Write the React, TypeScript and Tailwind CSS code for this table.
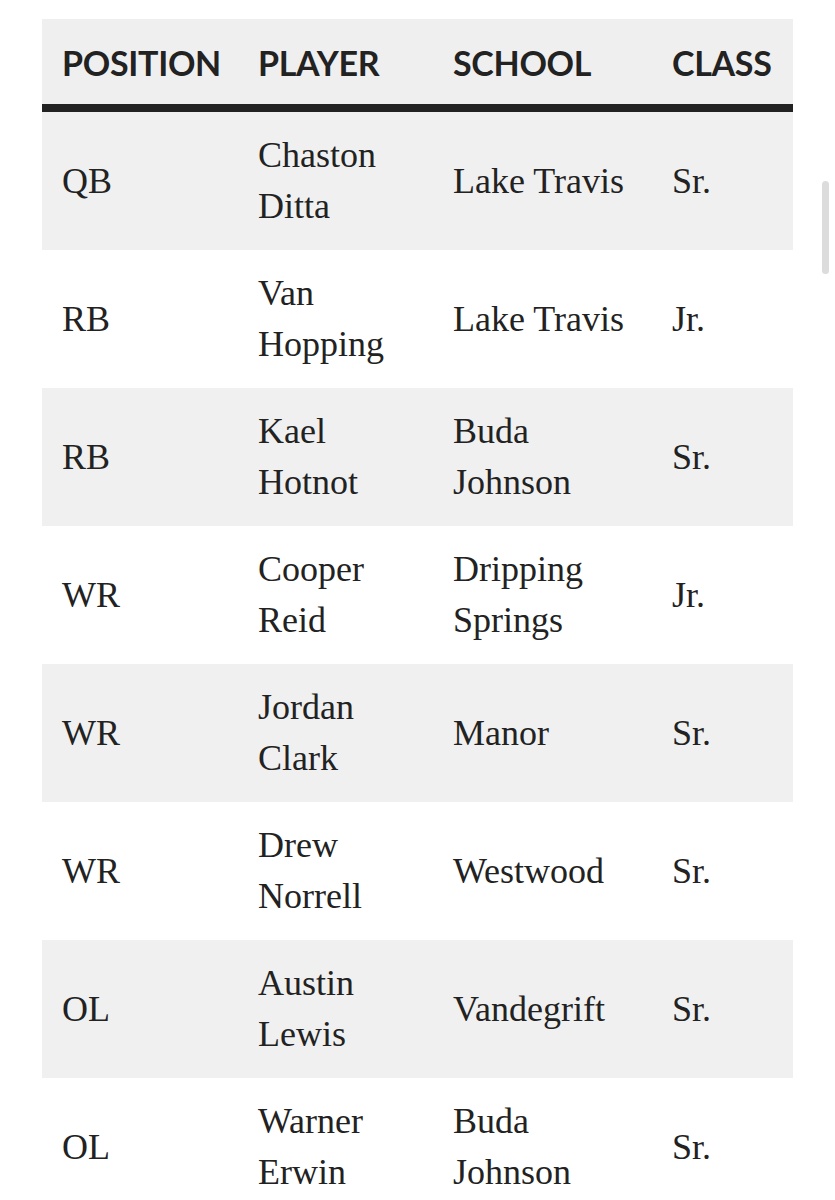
import React from "react";

type Row = {
  pos: string;
  player: string[];
  school: string[];
  cls: string;
};

const rows: Row[] = [
  { pos: "QB", player: ["Chaston", "Ditta"], school: ["Lake Travis"], cls: "Sr." },
  { pos: "RB", player: ["Van", "Hopping"], school: ["Lake Travis"], cls: "Jr." },
  { pos: "RB", player: ["Kael", "Hotnot"], school: ["Buda", "Johnson"], cls: "Sr." },
  { pos: "WR", player: ["Cooper", "Reid"], school: ["Dripping", "Springs"], cls: "Jr." },
  { pos: "WR", player: ["Jordan", "Clark"], school: ["Manor"], cls: "Sr." },
  { pos: "WR", player: ["Drew", "Norrell"], school: ["Westwood"], cls: "Sr." },
  { pos: "OL", player: ["Austin", "Lewis"], school: ["Vandegrift"], cls: "Sr." },
  { pos: "OL", player: ["Warner", "Erwin"], school: ["Buda", "Johnson"], cls: "Sr." },
];

const Lines = ({ lines }: { lines: string[] }) => (
  <>
    {lines.map((l, i) => (
      <React.Fragment key={i}>
        {i > 0 && <br />}
        {l}
      </React.Fragment>
    ))}
  </>
);

export default function App() {
  return (
    <div className="relative min-h-[1200px] bg-white pt-[19px] pl-[42px] overflow-hidden">
      {/* scrollbar thumb */}
      <div className="absolute left-[822px] top-[181px] w-[7px] h-[93px] rounded-full bg-[#dcdcdc]" />

      <table className="table-fixed border-separate border-spacing-0 w-[751px] text-[#222]">
        <colgroup>
          <col className="w-[196px]" />
          <col className="w-[195px]" />
          <col className="w-[219px]" />
          <col className="w-[141px]" />
        </colgroup>
        <thead>
          <tr className="bg-[#efefef]">
            {["POSITION", "PLAYER", "SCHOOL", "CLASS"].map((h) => (
              <th
                key={h}
                className="h-[93px] pl-5 pt-[2px] border-b-[8px] border-[#222] text-left align-middle font-['Lato',sans-serif] font-bold text-[34px] tracking-[-0.3px] whitespace-nowrap"
              >
                {h}
              </th>
            ))}
          </tr>
        </thead>
        <tbody className="font-['Liberation_Serif',serif] text-[36px] leading-[51px]">
          {rows.map((r, i) => (
            <tr key={i} className={i % 2 === 0 ? "bg-[#f0f0f0]" : "bg-white"}>
              <td className="h-[138px] pl-5 align-middle whitespace-nowrap">{r.pos}</td>
              <td className="pl-5 align-middle whitespace-nowrap">
                <Lines lines={r.player} />
              </td>
              <td className="pl-5 align-middle whitespace-nowrap">
                <Lines lines={r.school} />
              </td>
              <td className="pl-5 align-middle whitespace-nowrap">{r.cls}</td>
            </tr>
          ))}
        </tbody>
      </table>
    </div>
  );
}
